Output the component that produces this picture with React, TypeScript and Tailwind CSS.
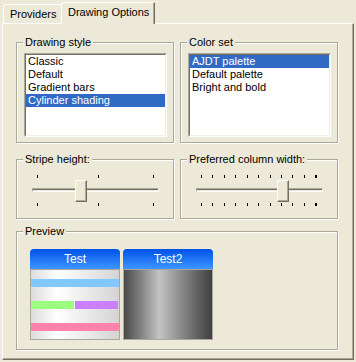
import type { ReactNode } from "react";

// Windows-XP-classic style dialog: "Drawing Options" tab of a preferences page

const styles = ["Classic", "Default", "Gradient bars", "Cylinder shading"];
const colorSets = ["AJDT palette", "Default palette", "Bright and bold"];

function Group({ title, className, children }: { title: string; className: string; children: ReactNode }) {
  return (
    <fieldset
      className={`border border-[#aca899] shadow-[inset_1px_1px_0_#fff,1px_1px_0_#fff] ${className}`}
    >
      <legend className="ml-[6px] px-[2px] leading-[13px] bg-[#ece9d8]">{title}</legend>
      {children}
    </fieldset>
  );
}

function ListBox({ items, selected }: { items: string[]; selected: number }) {
  return (
    <div className="mt-[4px] ml-[7px] w-[143px] h-[84px] border border-t-[#aca899] border-l-[#aca899] border-b-white border-r-white">
      <div className="h-full bg-white border border-t-[#716f64] border-l-[#716f64] border-b-[#f1efe2] border-r-[#f1efe2]">
        {items.map((item, i) => (
          <div
            key={item}
            className={`h-[13px] leading-[13px] pl-[2px] ${i === selected ? "bg-[#316ac5] text-white" : "text-black"}`}
          >
            {item}
          </div>
        ))}
      </div>
    </div>
  );
}

function Slider({ ticks, thumb }: { ticks: number[]; thumb: number }) {
  return (
    <div className="relative mt-[9px] ml-[15px] w-[127px] h-[32px]">
      {ticks.map((x, i) => (
        <div key={"t" + i} className="absolute top-0 w-px h-[3px] bg-black" style={{ left: x }} />
      ))}
      <div className="absolute left-0 right-0 top-[13px] h-[4px] border border-t-[#aca899] border-l-[#aca899] border-b-white border-r-white shadow-[inset_0_1px_0_#716f64]" />
      <div
        className="absolute top-[5px] w-[12px] h-[22px] bg-[#ece9d8] border border-t-white border-l-white border-r-[#716f64] border-b-[#716f64] shadow-[inset_-1px_-1px_0_#aca899]"
        style={{ left: thumb }}
      />
      {ticks.map((x, i) => (
        <div key={"b" + i} className="absolute top-[28px] w-px h-[3px] bg-black" style={{ left: x }} />
      ))}
    </div>
  );
}

function Card({ title, children }: { title: string; children: ReactNode }) {
  return (
    <div className="w-[90px] h-[91px] flex flex-col">
      <div className="h-[21px] rounded-t-[4px] border-b border-[#aca899] bg-gradient-to-b from-[#0050e6] to-[#3d95ff] text-white text-[12px] leading-[20px] text-center">
        {title}
      </div>
      <div className="flex-1 border-x border-b border-[#aca899]">{children}</div>
    </div>
  );
}

export default function App() {
  return (
    <div className="w-[356px] h-[362px] bg-[#ece9d8] pt-[2px] pl-[2px] text-[11px] text-black font-['Liberation_Sans',Arial,sans-serif]">
      {/* Tabs */}
      <div className="flex items-end h-[21px]">
        <div className="ml-[1px] w-[58px] h-[19px] pl-[6px] pt-[3px] leading-[13px] rounded-tl-[3px] border-t border-l border-white">
          Providers
        </div>
        <div className="relative z-10 -mb-px w-[94px] h-[22px] pl-[6px] pt-[3px] leading-[13px] bg-[#ece9d8] rounded-tl-[3px] border-t border-l border-white border-r border-r-[#716f64] shadow-[inset_-1px_0_0_#aca899]">
          Drawing Options
        </div>
      </div>

      {/* Panel */}
      <div className="w-[352px] h-[337px] border border-t-white border-l-white border-r-[#716f64] border-b-[#716f64] shadow-[inset_-1px_-1px_0_#aca899] pl-[13px] pt-[12px]">
        <div className="flex gap-[6px]">
          <Group title="Drawing style" className="w-[158px] h-[107px]">
            <ListBox items={styles} selected={3} />
          </Group>
          <Group title="Color set" className="w-[158px] h-[107px]">
            <ListBox items={colorSets} selected={0} />
          </Group>
        </div>

        <div className="flex gap-[6px] mt-[10px]">
          <Group title="Stripe height:" className="w-[158px] h-[66px]">
            <Slider ticks={[5, 66, 121]} thumb={43} />
          </Group>
          <Group title="Preferred column width:" className="w-[158px] h-[66px]">
            <Slider ticks={[5, 16, 28, 39, 51, 62, 74, 85, 96, 108, 119, 120]} thumb={81} />
          </Group>
        </div>

        <Group title="Preview" className="mt-[6px] w-[322px] h-[125px]">
          <div className="flex gap-[3px] mt-[11px] ml-[13px]">
            <Card title="Test">
              <div className="h-full pt-[9px] bg-gradient-to-r from-[#dcdcdc] via-[#ffffff] via-30% to-[#d4d4d4]">
                <div className="h-[8px] bg-[#80c8ff]" />
                <div className="flex gap-[1px] mt-[14px] pr-[1px] h-[8px]">
                  <div className="w-[43px] bg-[#9cff80]" />
                  <div className="flex-1 bg-[#c880ff]" />
                </div>
                <div className="h-[8px] mt-[14px] bg-[#ff82aa]" />
              </div>
            </Card>
            <Card title="Test2">
              <div className="h-full bg-gradient-to-r from-[#4a4a4a] via-[#c4c4c4] via-40% to-[#404040]" />
            </Card>
          </div>
        </Group>
      </div>
    </div>
  );
}
